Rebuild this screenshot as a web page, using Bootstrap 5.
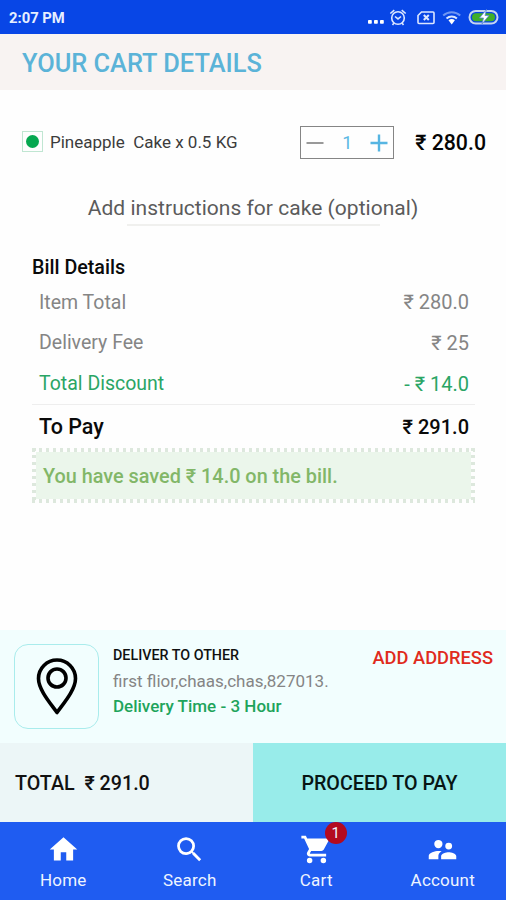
<!DOCTYPE html>
<html lang="en">
<head>
<meta charset="utf-8">
<meta name="viewport" content="width=device-width, initial-scale=1">
<title>Your Cart Details</title>
<link href="https://cdn.jsdelivr.net/npm/bootstrap@5.3.0/dist/css/bootstrap.min.css" rel="stylesheet">
<style>
body{font-family:Roboto,"Noto Sans",sans-serif;color:#111;background:#fefefe;line-height:1}
.screen{width:506px;height:900px}
.t{white-space:pre;display:inline-block}
.statusbar{height:34px;background:#0846e6;color:#e6efff}
.clock{font-size:14.8px;font-weight:700;padding:2px 0 0 1px}
.titlebar{height:56px;background:#f8f3f2;color:#5bb3d8;padding:3px 0 0 22px}
.title-text{font-size:25.4px;font-weight:500}
.item-row{height:103px;padding:2px 20px 0 22px}
.veg{width:21px;height:21px;border:1px solid #c0e6d2;margin-top:-3px}
.veg i{width:13px;height:13px;background:#06a850}
.item-name{font-size:17px;color:#3c3c3c;margin-left:7px}
.stepper{width:94px;height:33px;border:1px solid #858585;margin-right:21px}
.qty{font-size:18px;color:#5bb8e3}
.item-price{font-size:21.3px;font-weight:500;color:#050505}
.note{width:332px;height:31px;color:#5b5b5b}
.note-text{font-size:21px;letter-spacing:.03px}
.note-line{width:253px;height:2px;background:#f0f0ee}
.bill{padding:26px 31px 0 32px}
.bill-head{font-size:19.7px;font-weight:500;height:30px;padding-top:2px;color:#0a0a0a}
.bill-row{height:40.7px;padding:0 6px 0 7px;font-size:20px;color:#858585}
.bill-row .name{font-size:19.5px}
.bill-row.off{color:#2aa565}
.bill-row.due{height:44px;color:#0a0a0a;font-weight:500;border-top:1px solid #eee}
.bill-row.due .name{font-size:21.5px}
.saved{height:55px;color:#82b768;font-weight:500;font-size:19.85px;padding:2px 0 0 11px;
--h:repeating-linear-gradient(90deg,#dde8dd 0 3px,transparent 3px 7px);--v:repeating-linear-gradient(#dde8dd 0 3px,transparent 3px 7px);
background:var(--h) top/100% 4px no-repeat,var(--h) bottom/100% 4px no-repeat,var(--v) left/4px 100% no-repeat,var(--v) right/4px 100% no-repeat,linear-gradient(#ebf6eb,#ebf6eb) center/calc(100% - 8px) calc(100% - 8px) no-repeat}
.deliver{height:113px;background:#f2fefe;padding:14px 13px 0 14px}
.pinbox{width:85px;height:85px;border:1.5px solid #a9ecec;border-radius:14px;margin-right:14px}
.d1{font-size:14.3px;font-weight:500;height:22px}
.d2{font-size:17px;color:#858585;height:31px}
.d3{font-size:17px;font-weight:500;color:#1ea45c;height:18px}
.add{font-size:18.3px;font-weight:500;color:#e02b1d;height:28px}
.paybar{height:79px;font-size:19.7px;font-weight:500}
.total{background:#ecf6f7;padding:2px 0 0 15px}
.pay{background:#98ecea;color:#071514;padding-top:2px}
.tabs{height:78px;background:#1f5cf1;color:#eef4ff;font-size:17px;letter-spacing:.2px}
.tabs svg{display:block}
.tab{padding-top:11px;gap:6px}
.count{width:22px;height:22px;background:#b30a20;font-size:15px;top:-11px;left:25px}
</style>
</head>
<body>
<main class="screen d-flex flex-column overflow-hidden">
  <header class="statusbar d-flex align-items-center justify-content-between flex-shrink-0">
    <span class="t clock ms-2">2:07 PM</span>
    <svg width="140" height="34" viewBox="366 0 140 34" fill="none" stroke="#dce7ff" stroke-width="1.6">
      <g fill="#fff" stroke="none"><rect x="368" y="20" width="3.8" height="3.8" rx=".8"/><rect x="374" y="20" width="3.8" height="3.8" rx=".8"/><rect x="380" y="20" width="3.800" height="3.8" rx=".8"/></g>
      <circle cx="398" cy="18" r="6.3"/><path d="M390.3 13.500l4-3.300M405.700 13.500l-4-3.300M395 16.500l3 2.400 3-2.400M394 23l-1.500 2M402 23l1.500 2"/>
      <path d="M421.500 12h11.500q1 0 1 1v9.500q0 1-1 1h-14q-1 0-1-1v-7z"/><path d="M423.800 15l5 5M428.800 15l-5 5" stroke-width="2"/>
      <path d="M443.200 15.500a12.500 12.500 0 0 1 17 0" stroke="#6f95f2" stroke-width="2"/><path d="M446.500 18.500a8 8 0 0 1 10.400 0" stroke-width="2"/><path d="M448.500 20.300a5 5 0 0 1 6.400 0L451.700 24.500z" fill="#fff" stroke="none"/>
      <rect x="469.500" y="11" width="28" height="12.500" rx="6.200" stroke="#c5d5f2" stroke-width="2"/><rect x="472" y="13.300" width="23" height="8" rx="4" fill="#3fae2a" stroke="none"/><path d="M486.500 9.500l-7 8.500h4l-1.500 6 7-8.500h-4z" fill="#fff" stroke="#5c86d8" stroke-width=".8"/>
    </svg>
  </header>
  <div class="titlebar d-flex align-items-center flex-shrink-0"><h1 class="t title-text m-0">YOUR CART DETAILS</h1></div>

  <section class="item-row d-flex align-items-center flex-shrink-0">
    <span class="veg d-flex align-items-center justify-content-center"><i class="rounded-circle"></i></span>
    <span class="t item-name me-auto">Pineapple  Cake x 0.5 KG</span>
    <div class="stepper d-flex align-items-center justify-content-between px-1">
      <svg width="20" height="20" viewBox="0 0 20 20"><path d="M1.500 10h17" stroke="#999" stroke-width="2"/></svg>
      <span class="t qty">1</span>
      <svg width="20" height="20" viewBox="0 0 20 20"><path d="M1.500 10h17M10 1.500v17" stroke="#56b5e2" stroke-width="2.400"/></svg>
    </div>
    <span class="t item-price">₹ 280.0</span>
  </section>
  <div class="note mx-auto d-flex align-items-center justify-content-center flex-shrink-0"><span class="t note-text">Add instructions for cake (optional)</span></div>
  <div class="note-line mx-auto flex-shrink-0"></div>

  <section class="bill flex-grow-1">
    <h2 class="bill-head d-flex align-items-center m-0"><span class="t">Bill Details</span></h2>
    <div class="bill-row d-flex align-items-center justify-content-between"><span class="t name">Item Total</span><span class="t">₹ 280.0</span></div>
    <div class="bill-row d-flex align-items-center justify-content-between"><span class="t name">Delivery Fee</span><span class="t">₹ 25</span></div>
    <div class="bill-row off d-flex align-items-center justify-content-between"><span class="t name">Total Discount</span><span class="t">- ₹ 14.0</span></div>
    <div class="bill-row due d-flex align-items-center justify-content-between"><span class="t name">To Pay</span><span class="t">₹ 291.0</span></div>
    <div class="saved d-flex align-items-center"><span class="t">You have saved ₹ 14.0 on the bill.</span></div>
  </section>

  <section class="deliver d-flex align-items-start flex-shrink-0">
    <div class="pinbox d-flex align-items-center justify-content-center flex-shrink-0">
      <svg width="44" height="60" viewBox="0 0 44 60" fill="none" stroke="#000" stroke-width="3.600" stroke-linejoin="round"><path d="M22 55.500C16 47 3.500 33 3.500 21.500a18.500 18.500 0 0 1 37 0C40.500 33 28 47 22 55.500z"/><circle cx="22" cy="21" r="9"/></svg>
    </div>
    <div class="flex-grow-1">
      <div class="d1 d-flex align-items-center"><span class="t">DELIVER TO OTHER</span></div>
      <div class="d2 d-flex align-items-center"><span class="t">first flior,chaas,chas,827013.</span></div>
      <div class="d3 d-flex align-items-center"><span class="t">Delivery Time - 3 Hour</span></div>
    </div>
    <a class="add text-decoration-none d-flex align-items-center" href="#"><span class="t">ADD ADDRESS</span></a>
  </section>
  <div class="paybar d-flex flex-shrink-0">
    <div class="total w-50 d-flex align-items-center"><span class="t">TOTAL  ₹ 291.0</span></div>
    <div class="pay w-50 d-flex align-items-center justify-content-center"><span class="t">PROCEED TO PAY</span></div>
  </div>
  <nav class="tabs d-flex flex-shrink-0">
    <div class="tab w-25 d-flex flex-column align-items-center"><svg width="33" height="33" viewBox="0 0 24 24" fill="#fff"><path d="M10 20v-6h4v6h5v-8h3L12 3 2 12h3v8z"/></svg><span class="t">Home</span></div>
    <div class="tab w-25 d-flex flex-column align-items-center"><svg width="33" height="33" viewBox="0 0 24 24" fill="#fff"><path d="M15.500 14h-.790l-.280-.270A6.470 6.470 0 0 0 16 9.500 6.500 6.500 0 1 0 9.500 16c1.610 0 3.090-.590 4.230-1.570l.270.280v.790l5 4.990L20.490 19zm-6 0a4.500 4.500 0 1 1 0-9 4.500 4.500 0 0 1 0 9z"/></svg><span class="t">Search</span></div>
    <div class="tab w-25 d-flex flex-column align-items-center"><div class="position-relative"><svg width="33" height="33" viewBox="0 0 24 24" fill="#fff"><path d="M7 18a2 2 0 1 0 0 4 2 2 0 0 0 0-4zM1 2v2h2l3.600 7.590-1.350 2.450C4.520 15.370 5.480 17 7 17h12v-2H7.420a.25.25 0 0 1-.25-.25L8.100 13h7.450c.75 0 1.410-.41 1.750-1.030L20.880 5.480A1 1 0 0 0 20 4H5.210L4.270 2zM17 18a2 2 0 1 0 0 4 2 2 0 0 0 0-4z"/></svg><span class="count position-absolute rounded-circle d-flex align-items-center justify-content-center">1</span></div><span class="t">Cart</span></div>
    <div class="tab w-25 d-flex flex-column align-items-center"><svg width="33" height="33" viewBox="0 0 24 24" fill="#fff"><path d="M16.500 12a2.500 2.500 0 1 0 0-5 2.500 2.500 0 0 0 0 5zM9 11a3 3 0 1 0 0-6 3 3 0 0 0 0 6zm7.500 3c-1.830 0-5.500.920-5.500 2.750V19h11v-2.250C22 14.920 18.330 14 16.500 14zM9 13c-2.330 0-7 1.170-7 3.500V19h7v-2.250c0-.85.330-2.340 2.370-3.470C10.500 13.100 9.660 13 9 13z"/></svg><span class="t">Account</span></div>
  </nav>
</main>
<script src="https://cdn.jsdelivr.net/npm/bootstrap@5.3.0/dist/js/bootstrap.bundle.min.js"></script>
</body>
</html>
